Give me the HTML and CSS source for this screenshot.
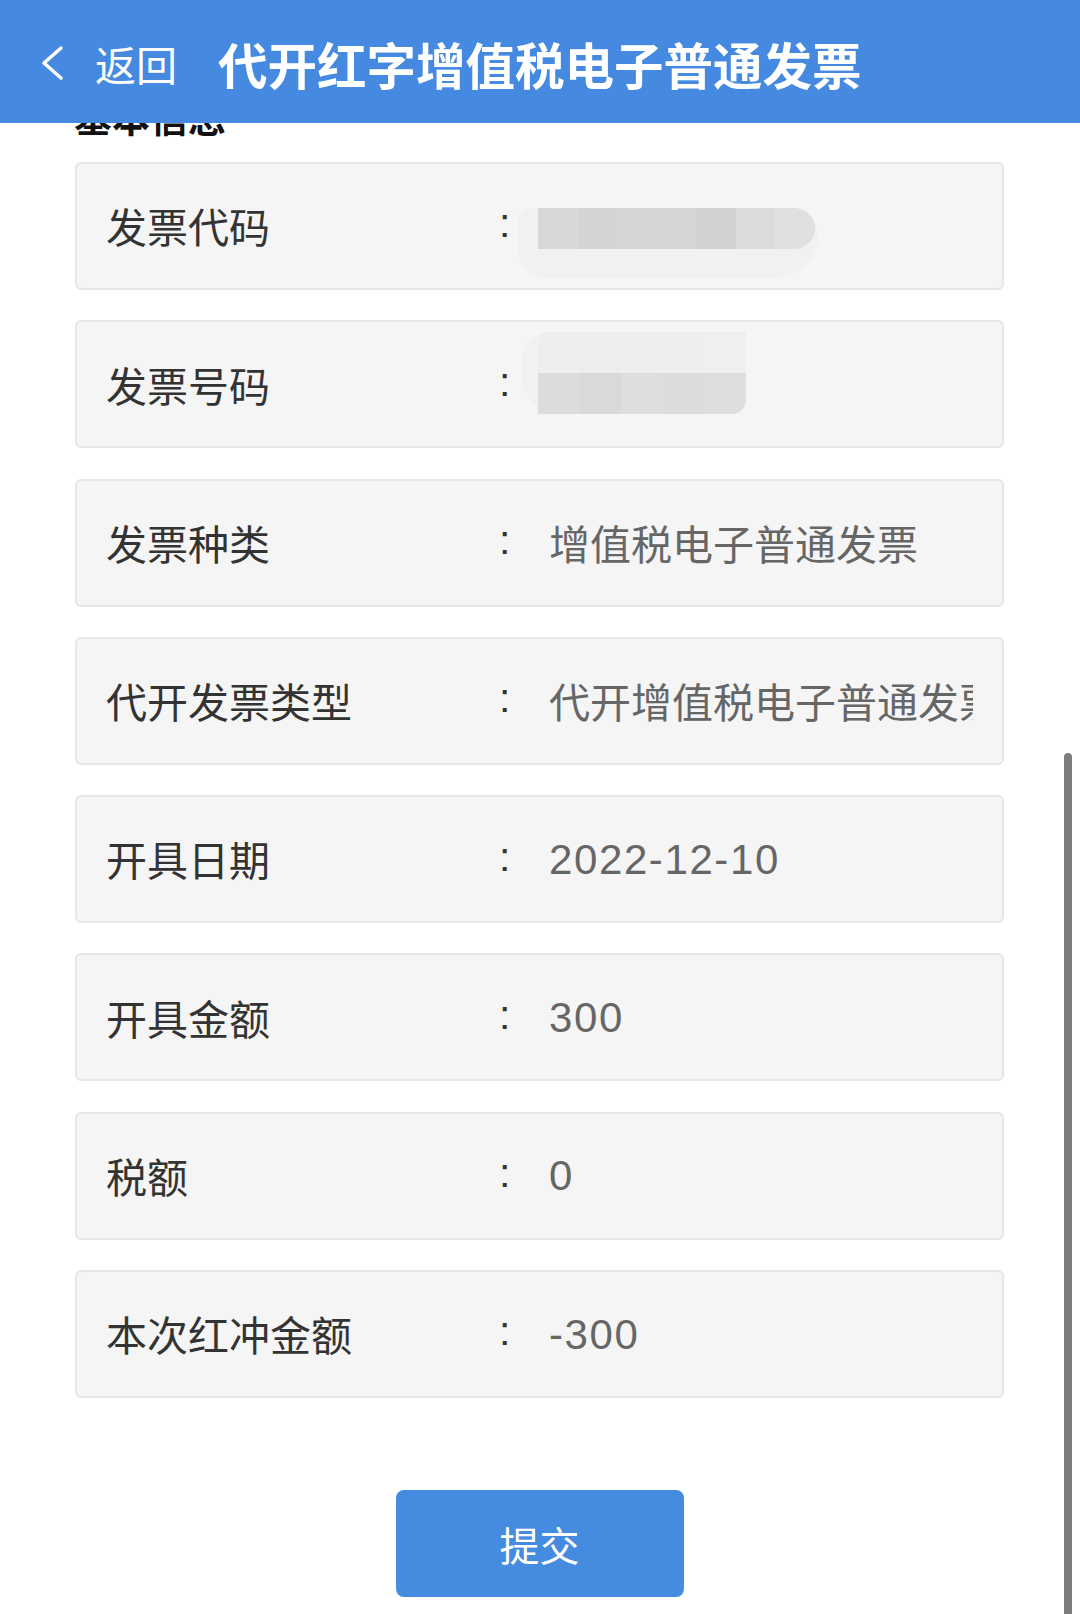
FILE: index.html
```html
<!DOCTYPE html>
<html lang="zh-CN">
<head>
<meta charset="utf-8">
<title>代开红字增值税电子普通发票</title>
<link rel="stylesheet" href="styles.css">
</head>
<body>
<header class="topbar">
  <svg class="back-icon" viewBox="0 0 24 36" width="24" height="36" aria-hidden="true">
    <polyline points="21,3 4,18 21,33" fill="none" stroke="#ffffff" stroke-width="3.5" stroke-linecap="round" stroke-linejoin="round"/>
  </svg>
  <span class="back-text">返回</span>
  <h1 class="title">代开红字增值税电子普通发票</h1>
</header>

<main class="content">
  <h2 class="section-title">基本信息</h2>
  <div class="list">
    <div class="row">
      <span class="label">发票代码</span>
      <span class="colon">:</span>
      <div class="value redacted">
        <div class="halo halo-1">
          <div class="mosaic mosaic-1">
            <i style="background:#d8d8d8"></i><i style="background:#d4d4d4"></i><i style="background:#d6d6d6"></i><i style="background:#d6d6d6"></i><i style="background:#d1d1d1"></i><i style="background:#dcdcdc"></i><i style="background:#e0e0e0"></i>
          </div>
        </div>
      </div>
    </div>
    <div class="row">
      <span class="label">发票号码</span>
      <span class="colon">:</span>
      <div class="value redacted">
        <div class="halo halo-2">
          <div class="mosaic mosaic-2">
            <div class="mrow light"><i style="background:#eeeeee"></i><i style="background:#ededed"></i><i style="background:#eeeeee"></i><i style="background:#eeeeee"></i><i style="background:#efefef"></i></div>
            <div class="mrow dark"><i style="background:#dcdcdc"></i><i style="background:#d9d9d9"></i><i style="background:#dedede"></i><i style="background:#dcdcdc"></i><i style="background:#dedede"></i></div>
          </div>
        </div>
      </div>
    </div>
    <div class="row">
      <span class="label">发票种类</span>
      <span class="colon">:</span>
      <div class="value">增值税电子普通发票</div>
    </div>
    <div class="row">
      <span class="label">代开发票类型</span>
      <span class="colon">:</span>
      <div class="value">代开增值税电子普通发票</div>
    </div>
    <div class="row">
      <span class="label">开具日期</span>
      <span class="colon">:</span>
      <div class="value num">2022-12-10</div>
    </div>
    <div class="row">
      <span class="label">开具金额</span>
      <span class="colon">:</span>
      <div class="value num">300</div>
    </div>
    <div class="row">
      <span class="label">税额</span>
      <span class="colon">:</span>
      <div class="value num">0</div>
    </div>
    <div class="row">
      <span class="label">本次红冲金额</span>
      <span class="colon">:</span>
      <div class="value num">-300</div>
    </div>
  </div>
  <div class="actions">
    <button class="submit" type="button">提交</button>
  </div>
</main>

<div class="scroll-indicator"></div>
</body>
</html>
```

FILE: styles.css
```css
* {
  box-sizing: border-box;
}

html, body {
  margin: 0;
  padding: 0;
  background: #ffffff;
}

body {
  width: 1080px;
  min-height: 1614px;
  font-family: "Noto Sans CJK SC", "Noto Sans", sans-serif;
  color: #333333;
  overflow: hidden;
}

/* ---------- header ---------- */
.topbar {
  position: fixed;
  top: 0;
  left: 0;
  width: 1080px;
  height: 123px;
  background: #458ae0;
  display: flex;
  align-items: center;
  padding: 4px 0 0 40px;
  z-index: 10;
  color: #ffffff;
}

.back-icon {
  display: block;
  flex: none;
  margin-top: -2px;
}

.back-text {
  font-size: 41px;
  line-height: 1;
  margin-left: 31px;
  font-weight: 400;
}

.title {
  margin: 0 0 0 41px;
  font-size: 49.5px;
  line-height: 1;
  font-weight: 700;
  letter-spacing: 0;
}

/* ---------- content ---------- */
.content {
  padding: 97px 76px 0 75px;
}

.section-title {
  margin: 0 0 27px -1px;
  font-size: 38px;
  line-height: 38px;
  height: 38px;
  font-weight: 700;
  color: #111111;
}

.list {
  display: flex;
  flex-direction: column;
  gap: 30.3px;
}

.row {
  height: 128px;
  background: #f5f5f5;
  border: 2px solid #e6e6e6;
  border-radius: 6px;
  display: flex;
  align-items: center;
  padding: 0 29px 0 29px;
  overflow: hidden;
}

.label {
  flex: none;
  width: 388px;
  font-size: 41px;
  line-height: 1.5;
  color: #333333;
}

.colon {
  flex: none;
  width: 55px;
  padding-left: 5px;
  font-family: "Liberation Sans", sans-serif;
  font-size: 41px;
  line-height: 1.3;
  color: #333333;
  margin-top: -4px;
}

.value {
  flex: 1;
  min-width: 0;
  overflow: hidden;
  white-space: nowrap;
  font-size: 41px;
  line-height: 1.5;
  color: #666666;
}

.value.redacted {
  overflow: visible;
  line-height: 1;
}

.value.num {
  font-family: "Liberation Sans", "Noto Sans CJK SC", sans-serif;
  letter-spacing: 1.6px;
  font-size: 42px;
}

/* redacted blocks */
.halo {
  display: inline-block;
  background: #f1f1f1;
  vertical-align: top;
}

.halo-1 {
  margin: 34px 0 0 -31px;
  padding: 0 3px 29px 20px;
  border-radius: 20px 40px 60px 40px;
}

.halo-2 {
  margin: 0 0 23px -28px;
  padding: 0 0 0 17px;
  border-radius: 30px 30px 20px 40px;
}

.mosaic i {
  display: block;
  width: 41.5px;
  height: 41px;
}

.mosaic-1 {
  display: flex;
  border-radius: 0 22px 22px 0;
  overflow: hidden;
}

.mosaic-1 i {
  width: 39.5px;
}

.mosaic-2 {
  display: flex;
  flex-direction: column;
  border-radius: 10px 0 14px 0;
  overflow: hidden;
}

.mrow {
  display: flex;
}

/* ---------- actions ---------- */
.actions {
  display: flex;
  justify-content: center;
  margin-top: 92px;
}

.submit {
  width: 288px;
  height: 107px;
  border: none;
  border-radius: 8px;
  background: #458be0;
  color: #ffffff;
  font-family: "Noto Sans CJK SC", sans-serif;
  font-size: 40px;
  line-height: 1;
  padding: 0;
}

/* ---------- scroll indicator (overlay) ---------- */
.scroll-indicator {
  position: fixed;
  right: 8px;
  top: 753px;
  bottom: -10px;
  width: 8px;
  border-radius: 4px;
  background: #7d7d7d;
}
```
